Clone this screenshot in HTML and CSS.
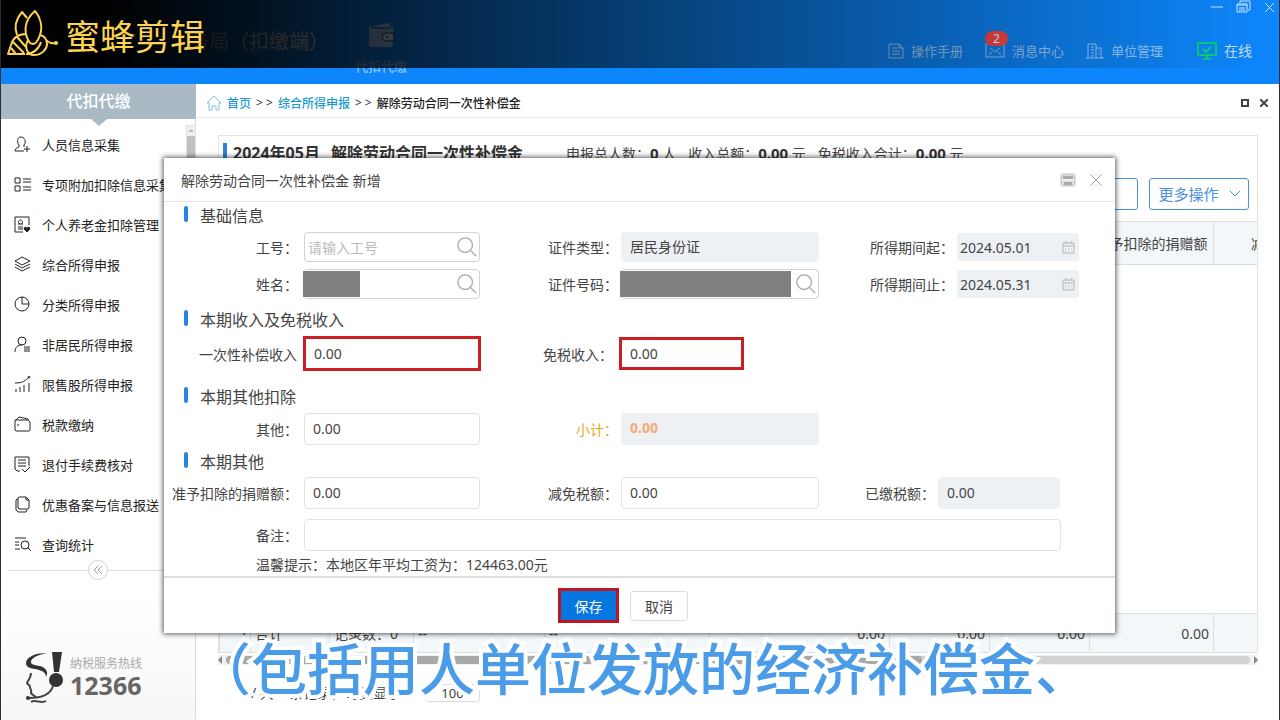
FILE: index.html
```html
<!DOCTYPE html>
<html lang="zh-CN">
<head>
<meta charset="utf-8">
<meta name="viewport" content="width=device-width, initial-scale=1">
<title>解除劳动合同一次性补偿金</title>
<link rel="stylesheet" href="styles.css">
</head>
<body>
<div class="app">
  <header class="header">
    <span class="emblem">中国税务</span>
    <span class="product">务局（扣缴端）</span>
    <a class="module" href="#">
      <svg width="28" height="26" viewBox="0 0 28 26"><path d="M2 5L20 1l3 1v3h3v18l-2 2H4l-2-2z" fill="currentColor"/><path d="M4 6h20" stroke="#0d3a6b"/><path d="M27 11h-8a4 4 0 0 0 0 8h8z" fill="currentColor" stroke="#0d3a6b"/><circle cx="20" cy="15" r="1" fill="#0d3a6b"/></svg>
      <span>代扣代缴</span>
    </a>
    <div class="header-right">
      <div class="window-controls">
        <button type="button" aria-label="最小化"><svg width="12" height="14" viewBox="0 0 12 14"><path d="M0 7h12"/></svg></button>
        <button type="button" aria-label="还原"><svg width="15" height="14" viewBox="0 0 15 14"><path d="M4 3V1h10v9h-2M1 4h10v8H1zM1 5h10M3 8h6M3 10h6"/></svg></button>
        <button type="button" aria-label="关闭"><svg width="10" height="14" viewBox="0 0 10 14"><path d="M1 3l9 9M10 3l-9 9"/></svg></button>
      </div>
      <nav class="tools">
        <a href="#"><svg width="16" height="16" viewBox="0 0 16 16"><path d="M1 1h10l4 4v10H1zM4 5h5M4 8h8M4 11h8M11 1v4h4"/></svg>操作手册</a>
        <a href="#" class="messages"><svg width="20" height="16" viewBox="0 0 20 16"><path d="M1 1h18v13H1zM5 5l5 4 5-4M4 12l3-3M16 12l-3-3"/></svg>消息中心<span class="badge">2</span></a>
        <a href="#"><svg width="18" height="16" viewBox="0 0 18 16"><path d="M2 15V1h8v14M10 5h5v10M0 15h18M5 4h3M5 7h3M5 10h3M5 13h3M12 8h1M12 11h1"/></svg>单位管理</a>
        <a href="#" class="online"><svg width="20" height="18" viewBox="0 0 20 18"><path d="M1 1h18v12H1zM6 17h8M10 13v4M6 7l3 3 5-5"/></svg>在线</a>
      </nav>
    </div>
  </header>

  <div class="main">
    <aside class="sidebar">
      <h2 class="side-head">代扣代缴</h2>
      <div class="side-scroll"><span></span></div>
      <ul class="menu">
        <li><a href="#"><svg viewBox="0 0 17 17"><path d="M5 9C2 5 4 1 7 1s6 4 3 8v2M5 9v2c-2 1-4 1-4 4h9M13 10v6M10 13h6"/></svg>人员信息采集</a></li>
        <li><a href="#"><svg viewBox="0 0 17 17"><path d="M1 2h5v5H1zM1 10h5v5H1zM9 3h8M9 6h8M9 11h8M9 14h8"/></svg>专项附加扣除信息采集</a></li>
        <li><a href="#"><svg viewBox="0 0 17 17"><path d="M9 16H1V1h14v8M6 8a2 2 0 1 1 1 0M4 8h5M4 11h5M4 13h5"/><path d="M13 16l-3-3 1-2 2 1 2-1 1 2z" fill="currentColor"/></svg>个人养老金扣除管理</a></li>
        <li><a href="#"><svg viewBox="0 0 17 17"><path d="M8 1l8 4-8 4-7-4zM1 8l7 4 8-4M1 11l7 4 8-4"/></svg>综合所得申报</a></li>
        <li><a href="#"><svg viewBox="0 0 17 17"><circle cx="8" cy="8" r="7"/><path d="M8 1v7h7"/></svg>分类所得申报</a></li>
        <li><a href="#"><svg viewBox="0 0 17 17"><circle cx="8" cy="5" r="4"/><path d="M1 16c0-5 3-7 7-7M10 11h6M10 13h6M10 15h6"/></svg>非居民所得申报</a></li>
        <li><a href="#"><svg viewBox="0 0 17 17"><path d="M2 16v-3M6 16v-5M10 16V9M15 16V7M1 7c6 0 9-1 13-5"/><circle cx="15" cy="1" r="1"/></svg>限售股所得申报</a></li>
        <li><a href="#"><svg viewBox="0 0 17 17"><path d="M1 4h13l2 2v8l-1 1H2l-1-1zM2 4l3-3 9 2v1M3 9h2"/></svg>税款缴纳</a></li>
        <li><a href="#"><svg viewBox="0 0 17 17"><path d="M6 15H3l-2-2V1h14v9M4 4h8M4 7h8M4 10h8M8 13l3 3 5-5"/></svg>退付手续费核对</a></li>
        <li><a href="#"><svg viewBox="0 0 17 17"><path d="M5 1h7l3 3v8l-1 1H5l-1-1V2zM4 3H3L2 4v10l2 2h8l1-2M12 1v3h3"/></svg>优惠备案与信息报送</a></li>
        <li><a href="#"><svg viewBox="0 0 17 17"><path d="M1 2h11M1 6h4M1 9h4M1 13h5M14 12l3 3"/><circle cx="11" cy="9" r="4"/></svg>查询统计</a></li>
      </ul>
      <div class="collapse"><button type="button" aria-label="收起菜单"><svg width="10" height="8" viewBox="0 0 10 8"><path d="M5 0L1 4l4 4M9 0L5 4l4 4"/></svg></button></div>
      <div class="hotline">
        <svg width="40" height="52" viewBox="0 0 40 52">
          <path d="M22 1C8 1 1 6 1 11c0 6 7 5 13 7 4 1 7 3 7 7 3-5 0-9-6-11-5-1-9-1-9-4 0-4 6-7 16-9z" fill="#333"/>
          <path d="M27 0h10l-3 20h-5z" fill="#333"/>
          <circle cx="31" cy="28" r="7" fill="#333"/>
          <path d="M6 21c0 5-4 9-4 10 0 2 3 1 3 4 0 2 2 3 1 5-1 3 5 3 5 6M28 34c-2 7-10 12-24 12M6 50c4-3 10 2 15-1" fill="none" stroke="#444" stroke-width="2"/>
          <circle cx="3" cy="46" r="2" fill="#333"/>
        </svg>
        <p><span>纳税服务热线</span><strong>12366</strong></p>
      </div>
    </aside>

    <section class="content">
      <nav class="crumbs">
        <svg width="16" height="16" viewBox="0 0 16 16"><path d="M1 8l7-7 7 7h-2v7h-3v-4H6v4H3V8z"/></svg>
        <a href="#">首页</a><span>&gt; &gt;</span><a href="#">综合所得申报</a><span>&gt; &gt;</span><b>解除劳动合同一次性补偿金</b>
        <div class="tab-controls">
          <button type="button" aria-label="最大化"><svg width="8" height="8" viewBox="0 0 8 8"><path d="M1 1h6v6H1z"/></svg></button>
          <button type="button" aria-label="关闭页签"><svg width="8" height="8" viewBox="0 0 8 8"><path d="M0 0l8 8M8 0L0 8"/></svg></button>
        </div>
      </nav>
      <div class="panel">
        <div class="panel-head">
          <h1><span>2024年05月</span> <span>解除劳动合同一次性补偿金</span></h1>
          <p>申报总人数：<b>0</b> 人</p><p>收入总额：<b>0.00</b> 元</p><p>免税收入合计：<b>0.00</b> 元</p>
        </div>
        <div class="actions">
          <button type="button" aria-label="导出"></button>
          <button type="button">更多操作<svg width="10" height="6" viewBox="0 0 10 6"><path d="M0 0l5 5 5-5"/></svg></button>
        </div>
        <div class="table-wrap">
          <table>
            <colgroup><col class="c-31"><col class="c-79"><col class="c-84"><col class="c-131"><col class="c-165"><col class="c-180"><col class="c-100"><col class="c-100"><col class="c-124"><col class="c-131"></colgroup>
            <thead><tr><th></th><th></th><th></th><th></th><th></th><th></th><th></th><th></th><th>准予扣除的捐赠额</th><th>减免税额</th></tr></thead>
            <tbody><tr><td colspan="10"></td></tr></tbody>
            <tfoot><tr><td>·</td><td>合计</td><td>记录数：0</td><td>--</td><td>--</td><td class="num">0.00</td><td class="num">0.00</td><td class="num">0.00</td><td class="num">0.00</td><td></td></tr></tfoot>
          </table>
        </div>
      </div>
      <div class="hscroll"><i class="arrow-left"></i><span><i></i></span><i class="arrow-right"></i></div>
      <div class="pager"><span>/ 共 0 条记录，每页显示</span><input type="text" value="100" aria-label="每页条数"></div>
    </section>
  </div>

  <form class="dialog" role="dialog" aria-labelledby="dialog-title">
    <div class="dialog-head">
      <h2 id="dialog-title">解除劳动合同一次性补偿金 新增</h2>
      <button type="button" aria-label="键盘"><svg width="16" height="14" viewBox="0 0 16 14"><rect x="1" y="1" width="14" height="12" rx="2" fill="#ddd" stroke="#bbb"/><path d="M3 3h10v3H3zM4 9h8v3H4z" fill="#aaa"/><path d="M2 7h12" stroke="#fff"/></svg></button>
      <button type="button" aria-label="关闭"><svg width="14" height="14" viewBox="0 0 14 14"><path d="M1 1l12 12M13 1L1 13" stroke="#aaa"/></svg></button>
    </div>
    <div class="dialog-body">
      <h3>基础信息</h3>
      <div class="row row-id">
        <label for="job">工号：</label>
        <div class="search"><input id="job" type="text" placeholder="请输入工号"><button type="button" aria-label="查找工号"><svg viewBox="0 0 22 22"><circle cx="9" cy="9" r="8"/><path d="M15 15l6 6"/></svg></button></div>
        <label for="type">证件类型：</label>
        <input id="type" class="off" type="text" value="居民身份证" readonly>
        <label for="from">所得期间起：</label>
        <div class="date"><input id="from" type="text" value="2024.05.01" readonly><svg width="13" height="13" viewBox="0 0 13 13"><path d="M1 2h11v10H1zM1 5h11M4 0v3M9 0v3M6 8h1M9 8h1M3 8h1M3 10h1M6 10h1"/></svg></div>
      </div>
      <div class="row row-id">
        <label for="name">姓名：</label>
        <div class="search"><span class="mask mask-name"></span><input id="name" type="text"><button type="button" aria-label="查找姓名"><svg viewBox="0 0 22 22"><circle cx="9" cy="9" r="8"/><path d="M15 15l6 6"/></svg></button></div>
        <label for="idno">证件号码：</label>
        <div class="search"><span class="mask mask-id"></span><input id="idno" type="text"><button type="button" aria-label="查找证件"><svg viewBox="0 0 22 22"><circle cx="9" cy="9" r="8"/><path d="M15 15l6 6"/></svg></button></div>
        <label for="to">所得期间止：</label>
        <div class="date"><input id="to" type="text" value="2024.05.31" readonly><svg width="13" height="13" viewBox="0 0 13 13"><path d="M1 2h11v10H1zM1 5h11M4 0v3M9 0v3M6 8h1M9 8h1M3 8h1M3 10h1M6 10h1"/></svg></div>
      </div>
      <h3 class="sec-income">本期收入及免税收入</h3>
      <div class="row row-income">
        <label for="income">一次性补偿收入</label><input id="income" class="mark mark-tall" type="text" value="0.00">
        <label for="exempt">免税收入：</label><input id="exempt" class="mark" type="text" value="0.00">
      </div>
      <h3 class="sec-deduct">本期其他扣除</h3>
      <div class="row row-deduct">
        <label for="other">其他：</label><input id="other" type="text" value="0.00">
        <label for="sum" class="sum">小计：</label><input id="sum" class="off sum" type="text" value="0.00" readonly>
      </div>
      <h3 class="sec-other">本期其他</h3>
      <div class="row row-tax">
        <label for="donate">准予扣除的捐赠额：</label><input id="donate" type="text" value="0.00">
        <label for="relief">减免税额：</label><input id="relief" type="text" value="0.00">
        <label for="paid">已缴税额：</label><input id="paid" class="off" type="text" value="0.00" readonly>
      </div>
      <div class="row row-note">
        <label for="note">备注：</label><input id="note" type="text">
      </div>
      <p class="tip">温馨提示：本地区年平均工资为：124463.00元</p>
    </div>
    <div class="dialog-foot">
      <button type="submit" class="save">保存</button>
      <button type="button" class="cancel">取消</button>
    </div>
  </form>

  <div class="brand">
    <svg width="52" height="48" viewBox="0 0 52 48" fill="none" stroke="#fdd34f" stroke-width="2" stroke-linejoin="round">
      <path d="M28 1c-11 9-12 22-5 32 5 3 8-2 10-8C36 16 33 7 28 1z"/>
      <path d="M20 8l-5-6C9 9 7 17 10 25"/>
      <path d="M19 24c-8 0-13 4-15 11L1 44h17M10 27l9 10M6 32l11 11M4 38l5 6"/>
      <path d="M21 30c-4 7-1 15 6 15 8 0 13-6 13-11s-3-8-7-9M19 44c7 0 13-5 15-12M39 30c4 3 5 4 10 3"/>
      <circle cx="49" cy="33" r="2" fill="#fdd34f" stroke="none"/>
    </svg>
    <span>蜜蜂剪辑</span>
  </div>
  <p class="subtitle">（包括用人单位发放的经济补偿金、</p>
</div>
</body>
</html>
```
FILE: styles.css
```css
* { box-sizing: border-box; }
body, h1, h2, h3, p, ul { margin: 0; padding: 0; }
body, button, input { font-family: "Noto Sans", "Noto Sans CJK SC", sans-serif; font-size: 14px; color: #444; }
button { padding: 0; border: 0; background: none; cursor: pointer; }
a { color: inherit; text-decoration: none; }
svg { display: block; flex: none; }
ul { list-style: none; }

.app {
  position: relative;
  display: flex;
  flex-direction: column;
  height: 100vh;
  min-height: 720px;
  overflow: hidden;
  border: solid #2a2f36;
  border-width: 0 1px;
  background: #fff;
}

/* header */
.header { display: flex; align-items: flex-start; height: 84px; flex: none; background: #0d86fb; color: rgba(255, 255, 255, .6); }
.emblem { width: 188px; padding: 52px 0 0 7px; font-size: 10px; line-height: 20px; font-weight: 700; color: #d81e2c; }
.product { width: 166px; padding-top: 28px; font-size: 20px; line-height: 28px; white-space: nowrap; color: #fff; }
.module { display: flex; flex-direction: column; align-items: center; gap: 8px; padding-top: 22px; font-size: 13px; line-height: 20px; }
.header-right { display: flex; flex-direction: column; align-items: flex-end; gap: 27px; margin-left: auto; }
.window-controls { display: flex; gap: 13px; padding-right: 5px; }
.window-controls svg { fill: none; stroke: #d5e9fd; }
.tools { display: flex; gap: 22px; padding-right: 27px; font-size: 13px; line-height: 20px; }
.tools a { position: relative; display: flex; align-items: center; gap: 7px; }
.tools svg { fill: none; stroke: currentColor; }
.tools .online { margin-left: 12px; font-size: 14px; color: #c4dffa; }
.online svg { stroke: #0ccf7b; stroke-width: 2; }
.badge { position: absolute; left: 0; top: -10px; width: 23px; border-radius: 7px; background: #ff4b4b; color: #fff; font-size: 12px; line-height: 15px; text-align: center; }

/* sidebar */
.main { display: flex; flex: 1; min-height: 0; }
.sidebar { position: relative; display: flex; flex-direction: column; width: 195px; flex: none; border-right: 1px solid #ddd; background: linear-gradient(#fff 80%, #f7f7f7); }
.side-head { position: relative; margin-right: -1px; background: #a9bac4; color: #fff; font-size: 16px; line-height: 35px; font-weight: 500; text-align: center; }
.side-head::after { content: ""; position: absolute; left: 50%; top: 100%; margin-left: -8px; border: 8px solid transparent; border-width: 7px 8px 0; border-top-color: #a9bac4; }
.side-scroll { position: absolute; right: -1px; top: 41px; width: 10px; height: 120px; padding-top: 10px; border: 1px solid #e2e2e2; background: #f1f1f1; }
.side-scroll::before { content: ""; position: absolute; left: 1px; top: 3px; border: 3px solid transparent; border-top-width: 0; border-bottom-color: #bbb; }
.side-scroll span { display: block; height: 100%; background: #c1c1c1; }
.menu { padding-top: 5px; }
.menu a { display: flex; align-items: center; gap: 11px; height: 40px; padding-left: 13px; color: #222; font-size: 13px; white-space: nowrap; }
.menu svg { width: 17px; height: 17px; fill: none; stroke: currentColor; }
.collapse { display: flex; align-items: center; margin: -4px 8px 0 7px; }
.collapse::before, .collapse::after { content: ""; flex: 1; height: 1px; background: #ddd; }
.collapse button { display: grid; place-items: center; width: 20px; height: 20px; border: 1px solid #d5d5d8; border-radius: 50%; }
.collapse svg { fill: none; stroke: #9a9aaa; }
.hotline { display: flex; align-items: center; gap: 5px; margin-top: auto; padding: 0 0 16px 24px; }
.hotline p { display: flex; flex-direction: column; padding-bottom: 4px; }
.hotline span { font-size: 12px; line-height: 18px; color: #aaa; }
.hotline strong { font-size: 25px; line-height: 24px; color: #666; }

/* page */
.content { display: flex; flex-direction: column; flex: 1; min-width: 0; padding: 0 4px 18px 0; }
.crumbs { display: flex; align-items: center; gap: 5px; height: 34px; padding: 4px 7px 0 10px; border-bottom: 1px solid #eee; font-size: 12px; color: #333; }
.crumbs > svg { fill: none; stroke: #7fc0dc; }
.crumbs a { color: #1b9ad0; font-weight: 500; }
.crumbs b { font-weight: 500; color: #222; }
.tab-controls { display: flex; gap: 11px; margin-left: auto; }
.tab-controls svg { fill: none; stroke: #444; stroke-width: 2; }
.panel { display: flex; flex-direction: column; flex: 1; min-height: 0; margin: 17px 17px 0 22px; border: 1px solid #e3e3e3; border-bottom: 0; }
.panel-head { display: flex; align-items: center; gap: 12px; height: 34px; padding-left: 4px; white-space: nowrap; }
.panel-head h1 { display: flex; gap: 11px; width: 331px; padding-left: 6px; border-left: 4px solid #2c82dd; font-size: 16px; line-height: 20px; color: #333; }
.panel-head b { font-size: 15px; color: #333; }
.actions { display: flex; justify-content: flex-end; gap: 11px; padding: 8px 8px 11px 0; }
.actions button { display: flex; align-items: center; justify-content: center; gap: 11px; width: 100px; height: 32px; border: 1px solid #4a8fdc; border-radius: 3px; color: #4a8fdc; font-size: 15px; line-height: 20px; }
.actions svg { fill: none; stroke: currentColor; }
.table-wrap { flex: 1; min-height: 0; overflow: hidden; }
table { width: 1125px; height: 100%; border-collapse: collapse; table-layout: fixed; }
.c-31 { width: 31px; } .c-79 { width: 79px; } .c-84 { width: 84px; } .c-131 { width: 131px; } .c-165 { width: 165px; }
.c-180 { width: 180px; } .c-100 { width: 100px; } .c-124 { width: 124px; }
th, tfoot td { padding: 0 4px; border: 1px solid #dcdfe2; background: #f2f7f9; font-weight: 400; white-space: nowrap; }
th { height: 43px; }
tfoot td { height: 39px; }
tfoot td:first-child { text-align: right; }
.num { text-align: right; }
.hscroll { display: flex; align-items: center; gap: 4px; margin: 2px 17px 0 22px; height: 10px; background: #f1f1f1; }
.hscroll span { flex: 1; height: 8px; border-radius: 4px; background: #d2d2d2; }
.hscroll span i { display: block; width: 68%; height: 8px; border-radius: 4px; background: #a8a8a8; }
.arrow-left, .arrow-right { border: 4px solid transparent; }
.arrow-left { border-left-width: 0; border-right-color: #888; }
.arrow-right { border-right-width: 0; border-left-color: #888; }
.pager { display: flex; align-items: center; gap: 12px; padding: 19px 0 0 55px; }
.pager span { width: 162px; line-height: 18px; white-space: nowrap; overflow: hidden; }
.pager input { width: 55px; height: 18px; padding: 0; border: 1px solid #ddd; border-radius: 3px; font-size: 13px; text-align: center; }

/* dialog */
.dialog { position: absolute; left: 163px; right: 164px; top: 158px; background: #fff; box-shadow: 0 0 5px 1px rgba(0, 0, 0, .65); }
.dialog-head { display: flex; align-items: center; gap: 13px; height: 44px; padding: 0 12px 0 17px; border-bottom: 1px solid #e6e6e6; }
.dialog-head h2 { margin-right: auto; font-size: 14px; font-weight: 400; }
.dialog-head svg { fill: none; }
.dialog h3 { position: relative; margin: 2px 0 4px; padding-left: 36px; font-size: 16px; line-height: 24px; font-weight: 400; }
.dialog h3::before { content: ""; position: absolute; left: 20px; top: 2px; width: 4px; height: 16px; border-radius: 2px; background: #2684e3; }
.dialog .sec-income { margin-top: 9px; }
.dialog .sec-deduct { margin-top: 14px; }
.dialog .sec-other { margin: 5px 0 3px; }
.row { display: grid; align-items: center; }
.row-id { grid-template-columns: 140px 176fr 141px 198fr 138px 122fr; padding-right: 36px; }
.row-id + .row-id { margin-top: 7px; }
.row-income { grid-template-columns: 139px 178fr 138px 125fr; padding-right: 371px; }
.row-deduct { grid-template-columns: 140px 176fr 141px 198fr; padding-right: 296px; }
.row-tax { grid-template-columns: 140px 176fr 141px 198fr 119px 122fr; padding-right: 55px; }
.row-note { grid-template-columns: 140px 1fr; margin-top: 10px; padding-right: 54px; }
.row label { padding-right: 3px; text-align: right; white-space: nowrap; }
.row label:first-child { padding-right: 6px; }
.row-income label { padding-right: 6px; }
.row input { width: 100%; min-width: 0; height: 32px; padding: 0 8px 2px; border: 1px solid #e2e2e2; border-radius: 4px; background: #fff; outline: 0; }
.row-id input { height: 30px; }
.row input.off { border-color: #eef1f4; background: #eef1f4; }
.row input.mark { height: 33px; padding: 0 8px; border: 3px solid #cc1f24; border-radius: 0; }
.row input.mark-tall { height: 35px; }
.row .sum { color: #e8a81c; }
.row input.sum { padding-bottom: 4px; color: #f5aa78; font-weight: 700; border-radius: 0; }
.search { display: flex; align-items: center; min-width: 0; height: 30px; border: 1px solid #d3d3d3; border-radius: 4px; }
.row .search input { flex: 1; width: 0; height: 28px; padding: 0 0 0 3px; border: 0; background: none; }
.search input::placeholder { color: #bbb; opacity: 1; }
.search button { display: grid; place-items: center; flex: none; width: 24px; }
.search svg { width: 20px; height: 20px; fill: none; stroke: #aaa; stroke-width: 1.5; }
.mask { flex: none; height: 26px; margin-left: -2px; background: #808080; }
.mask-name { width: 57px; }
.mask-id { width: 171px; }
.date { display: flex; align-items: center; min-width: 0; height: 28px; padding-right: 4px; border-radius: 3px; background: #eef1f4; }
.row .date input { flex: 1; width: 0; height: 28px; padding: 0 3px; border: 0; background: none; }
.date svg { fill: none; stroke: #b5b5b5; }
.tip { padding: 4px 0 1px 92px; line-height: 20px; }
.dialog-foot { display: flex; justify-content: center; align-items: center; gap: 11px; height: 57px; padding-right: 33px; border-top: 2px solid #dedede; }
.save { width: 61px; height: 35px; border: 3px solid #bf1722; background: #0676e0; color: #fff; }
.cancel { width: 58px; height: 30px; border: 1px solid #ddd; border-radius: 3px; }

/* video overlays */
.brand { position: absolute; left: -1px; right: -1px; top: 0; display: flex; align-items: center; gap: 6px; height: 68px; padding-left: 7px; background: linear-gradient(90deg, #000 100px, rgba(0, 0, 0, 0) 99%); color: #fdd34f; font-size: 35px; line-height: 48px; font-weight: 400; pointer-events: none; }
.brand span { font-family: "Noto Sans CJK SC", sans-serif; padding-top: 2px; }
.subtitle { position: absolute; left: 0; right: 0; bottom: 18px; padding-left: 6px; color: #4a9be8; font-family: "Noto Sans CJK SC", sans-serif; font-size: 56px; line-height: 72px; font-weight: 500; text-align: center; white-space: nowrap; -webkit-text-stroke: 8px #fff; paint-order: stroke fill; stroke-linejoin: round; pointer-events: none; }
```
